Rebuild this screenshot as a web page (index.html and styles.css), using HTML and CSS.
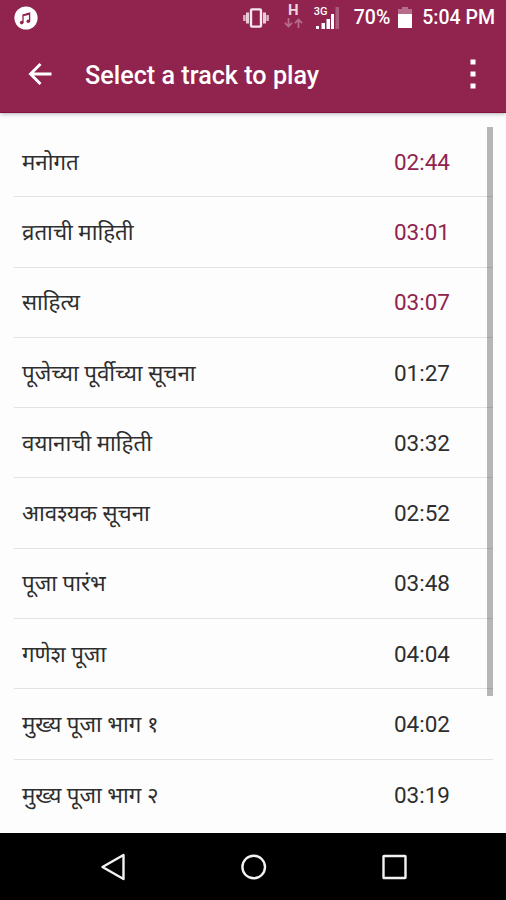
FILE: index.html
```
<!DOCTYPE html>
<html lang="mr">
<head>
    <meta charset="UTF-8">
    <meta name="viewport" content="width=device-width, initial-scale=1.0">
    <title>Select a track to play</title>
    <link rel="stylesheet" href="styles.css">
</head>
<body>
    <div class="phone">
        <header class="top">
            <div class="status-bar">
                <svg class="music-icon" width="24" height="24" viewBox="0 0 24 24">
                    <circle cx="12" cy="12" r="11.6" fill="#fff"/>
                    <path d="M9 16.4V8.9l6.6-1.7v7.8" fill="none" stroke="#90244f" stroke-width="1.3"/>
                    <path d="M9 9.6l6.6-1.7" stroke="#90244f" stroke-width="1.6"/>
                    <circle cx="7.7" cy="16.6" r="1.8" fill="#90244f"/>
                    <circle cx="14.3" cy="15.2" r="1.8" fill="#90244f"/>
                </svg>
                <div class="status-icons">
                    <svg class="vibrate-icon" width="26" height="22" viewBox="0 0 26 22">
                        <rect x="8" y="2.4" width="10" height="17.2" rx="1" fill="none" stroke="#f6e8ee" stroke-width="2.4"/>
                        <path d="M4.5 5.5v11M21.5 5.5v11" stroke="#e8cdd9" stroke-width="3"/>
                        <path d="M1.4 8v6M24.6 8v6" stroke="#d9aec0" stroke-width="2.6"/>
                    </svg>
                    <div class="data-type">
                        <span>H</span>
                        <svg width="19" height="10" viewBox="0 0 19 10">
                            <path d="M4.5 0v8M1 4.8l3.5 3.7L8 4.8M14.5 10V2M11 5.2l3.5-3.7L18 5.2" fill="none" stroke="#b76c8b" stroke-width="1.8"/>
                        </svg>
                    </div>
                    <div class="signal">
                        <span>3G</span>
                        <svg width="24" height="23" viewBox="0 0 24 23">
                            <path d="M0 20h3v3H0zM5.5 17H9v6H5.5zM10.5 13h3.5v10h-3.5zM15 8h3v15h-3z" fill="#fff"/>
                            <path d="M19.5 1h3.5v22h-3.5z" fill="#ad5b7c"/>
                        </svg>
                    </div>
                    <span class="battery-level">70%</span>
                    <svg class="battery-icon" width="14" height="21" viewBox="0 0 14 21">
                        <path d="M4 0h6v2h4v5H0V2h4z" fill="#b76c8b"/>
                        <path d="M0 7h14v14H0z" fill="#fff"/>
                    </svg>
                    <span class="clock">5:04 PM</span>
                </div>
            </div>
            <div class="toolbar">
                <svg class="back-icon" width="24" height="24" viewBox="0 0 24 24">
                    <path d="M23.5 12H2.5M12.5 2L2.5 12l10 10" fill="none" stroke="#fff" stroke-width="2.9"/>
                </svg>
                <h1>Select a track to play</h1>
                <svg class="menu-icon" width="6" height="30" viewBox="0 0 6 30">
                    <path d="M.5.5h5v5h-5zM.5 12.5h5v5h-5zM.5 24.5h5v5h-5z" fill="#fff"/>
                </svg>
            </div>
        </header>

        <main class="content">
            <ul class="tracks">
                <li class="free"><span>मनोगत</span><time>02:44</time></li>
                <li class="free"><span>व्रताची माहिती</span><time>03:01</time></li>
                <li class="free"><span>साहित्य</span><time>03:07</time></li>
                <li><span>पूजेच्या पूर्वीच्या सूचना</span><time>01:27</time></li>
                <li><span>वयानाची माहिती</span><time>03:32</time></li>
                <li><span>आवश्यक सूचना</span><time>02:52</time></li>
                <li><span>पूजा पारंभ</span><time>03:48</time></li>
                <li><span>गणेश पूजा</span><time>04:04</time></li>
                <li><span>मुख्य पूजा भाग १</span><time>04:02</time></li>
                <li><span>मुख्य पूजा भाग २</span><time>03:19</time></li>
            </ul>
            <div class="scrollbar"></div>
        </main>

        <nav class="nav-bar">
            <svg width="26" height="28" viewBox="0 0 26 28">
                <path d="M23.5 2v24L2.5 14z" fill="none" stroke="#f2f2f2" stroke-width="2.4" stroke-linejoin="round"/>
            </svg>
            <svg width="26" height="28" viewBox="0 0 26 28">
                <circle cx="12.7" cy="14" r="11.3" fill="none" stroke="#f2f2f2" stroke-width="2.4"/>
            </svg>
            <svg width="26" height="28" viewBox="0 0 26 28">
                <rect x="2.5" y="3" width="22" height="22" rx=".5" fill="none" stroke="#f2f2f2" stroke-width="2.4"/>
            </svg>
        </nav>
    </div>
</body>
</html>
```

FILE: styles.css
```
* {
    box-sizing: border-box;
}

body {
    margin: 0;
    background: #fdfdfd;
    font-family: Roboto, "Noto Sans Devanagari", "Noto Sans", sans-serif;
}

.phone {
    display: flex;
    flex-direction: column;
    height: 900px;
    overflow: hidden;
}

.top {
    height: 113px;
    flex: none;
    background: #90244f;
    border-bottom: 1px solid #85103f;
    box-shadow: 0 1px 4px rgba(0, 0, 0, 0.3);
    color: #fff;
    z-index: 1;
}

.status-bar {
    display: flex;
    align-items: center;
    justify-content: space-between;
    height: 35px;
    padding: 0 11px 0 14px;
}

.status-icons {
    display: flex;
    align-items: center;
    font-size: 19.5px;
    font-weight: 500;
}

.data-type {
    display: flex;
    flex-direction: column;
    align-items: center;
    width: 19px;
    margin-left: 15px;
    margin-top: -4px;
}

.data-type span {
    font-size: 15px;
    font-weight: 700;
    line-height: 15px;
    color: #ecd4de;
}

.signal {
    position: relative;
    display: flex;
    margin-left: 13px;
}

.signal span {
    position: absolute;
    left: -2px;
    top: 0;
    font-size: 11px;
    line-height: 11px;
}

.battery-level {
    margin-left: 14px;
}

.battery-icon {
    margin-left: 8px;
}

.clock {
    margin-left: 10px;
}

.toolbar {
    display: flex;
    align-items: center;
    height: 77px;
    padding: 0 30px 0 28px;
}

.toolbar h1 {
    flex: 1;
    margin: 3px 0 0 33px;
    font-size: 25.2px;
    font-weight: 500;
}

.content {
    position: relative;
    flex: 1;
    padding: 14px 13px 0 14px;
}

.tracks {
    list-style: none;
    margin: 0;
    padding: 0;
}

.tracks li {
    display: flex;
    align-items: center;
    justify-content: space-between;
    height: 70.3px;
    padding: 0 43px 0 8px;
    border-bottom: 1px solid #e2e2e2;
    font-size: 22.5px;
    color: #2e2e2e;
}

.tracks li:last-child {
    border-bottom: none;
}

.tracks span {
    padding-top: 4px;
    font-size: 22.3px;
}

.tracks .free time {
    color: #90244f;
}

.scrollbar {
    position: absolute;
    top: 14px;
    right: 13px;
    width: 6px;
    height: 569px;
    background: rgba(0, 0, 0, 0.28);
}

.nav-bar {
    display: flex;
    flex: none;
    align-items: center;
    justify-content: space-between;
    height: 67px;
    padding: 0 99px 0 100px;
    background: #000;
}
```
